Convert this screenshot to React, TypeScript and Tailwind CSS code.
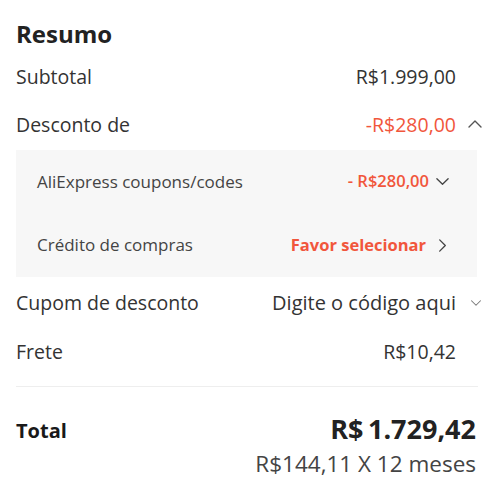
import React from 'react';

const font = { fontFamily: '"Open Sans", "Noto Sans", sans-serif' };

function Chevron({ dir, className }: { dir: 'up' | 'down' | 'right'; className?: string }) {
  const points =
    dir === 'up' ? '2,10 8,4 14,10' : dir === 'down' ? '2,5 8,11 14,5' : '5,2 11,8 5,14';
  return (
    <svg className={className} viewBox="0 0 16 16" fill="none" stroke="currentColor" strokeWidth={1.4}>
      <polyline points={points} strokeLinecap="round" strokeLinejoin="round" />
    </svg>
  );
}

export default function App() {
  return (
    <div className="w-[500px] h-[483px] bg-white text-[#333] pl-4 pr-4" style={font}>
      {/* Title */}
      <div className="pt-[18px] h-[54px] text-[24px] font-bold leading-[32px] text-[#222]">Resumo</div>

      {/* Subtotal */}
      <div className="flex items-center justify-between h-[46px] text-[19.5px]">
        <span>Subtotal</span>
        <span className="mr-[28px]">R$1.999,00</span>
      </div>

      {/* Desconto */}
      <div className="flex items-center justify-between h-[50px] text-[19.5px]">
        <span>Desconto de</span>
        <div className="flex items-center">
          <span className="text-[#f1563c]">-R$280,00</span>
          <Chevron dir="up" className="w-[16px] h-[16px] ml-[11px] mr-[1px] text-[#555]" />
        </div>
      </div>

      {/* Breakdown */}
      <div className="mr-[7px] bg-[#f7f7f7] pl-[21px] pr-[27px] text-[17px]">
        <div className="flex items-center justify-between h-[63px]">
          <span className="text-[#444]">AliExpress coupons/codes</span>
          <div className="flex items-center">
            <span className="text-[16.5px] text-[#f1563c] font-semibold">- R$280,00</span>
            <Chevron dir="down" className="w-[15px] h-[15px] ml-[6px] text-[#444]" />
          </div>
        </div>
        <div className="flex items-center justify-between h-[64px]">
          <span className="text-[#444]">Crédito de compras</span>
          <div className="flex items-center">
            <span className="text-[16.5px] text-[#f1563c] font-bold">Favor selecionar</span>
            <Chevron dir="right" className="w-[15px] h-[15px] ml-[9px] text-[#444]" />
          </div>
        </div>
      </div>

      {/* Cupom */}
      <div className="flex items-center justify-between h-[50px] mt-[1px] text-[19.5px]">
        <span>Cupom de desconto</span>
        <div className="flex items-center">
          <span className="text-[20px]">Digite o código aqui</span>
          <Chevron dir="down" className="w-[12px] h-[12px] ml-[14px] mr-[2px] text-[#777]" />
        </div>
      </div>

      {/* Frete */}
      <div className="flex items-center justify-between h-[48px] text-[19.5px]">
        <span>Frete</span>
        <span className="mr-[28px]">R$10,42</span>
      </div>

      <div className="h-[1px] bg-[#eeeeee] mt-[10px] mr-[6px]" />

      {/* Total */}
      <div className="flex justify-between mr-[8px] pt-[25px]">
        <span className="mt-[2px] text-[20px] font-bold text-[#191919] leading-[34px]">Total</span>
        <div className="flex flex-col items-end">
          <span className="text-[27px] font-bold text-[#222] leading-[34px]">R$&thinsp;1.729,42</span>
          <span className="text-[22.5px] text-[#444] leading-[36px]">R$144,11 X 12 meses</span>
        </div>
      </div>
    </div>
  );
}
